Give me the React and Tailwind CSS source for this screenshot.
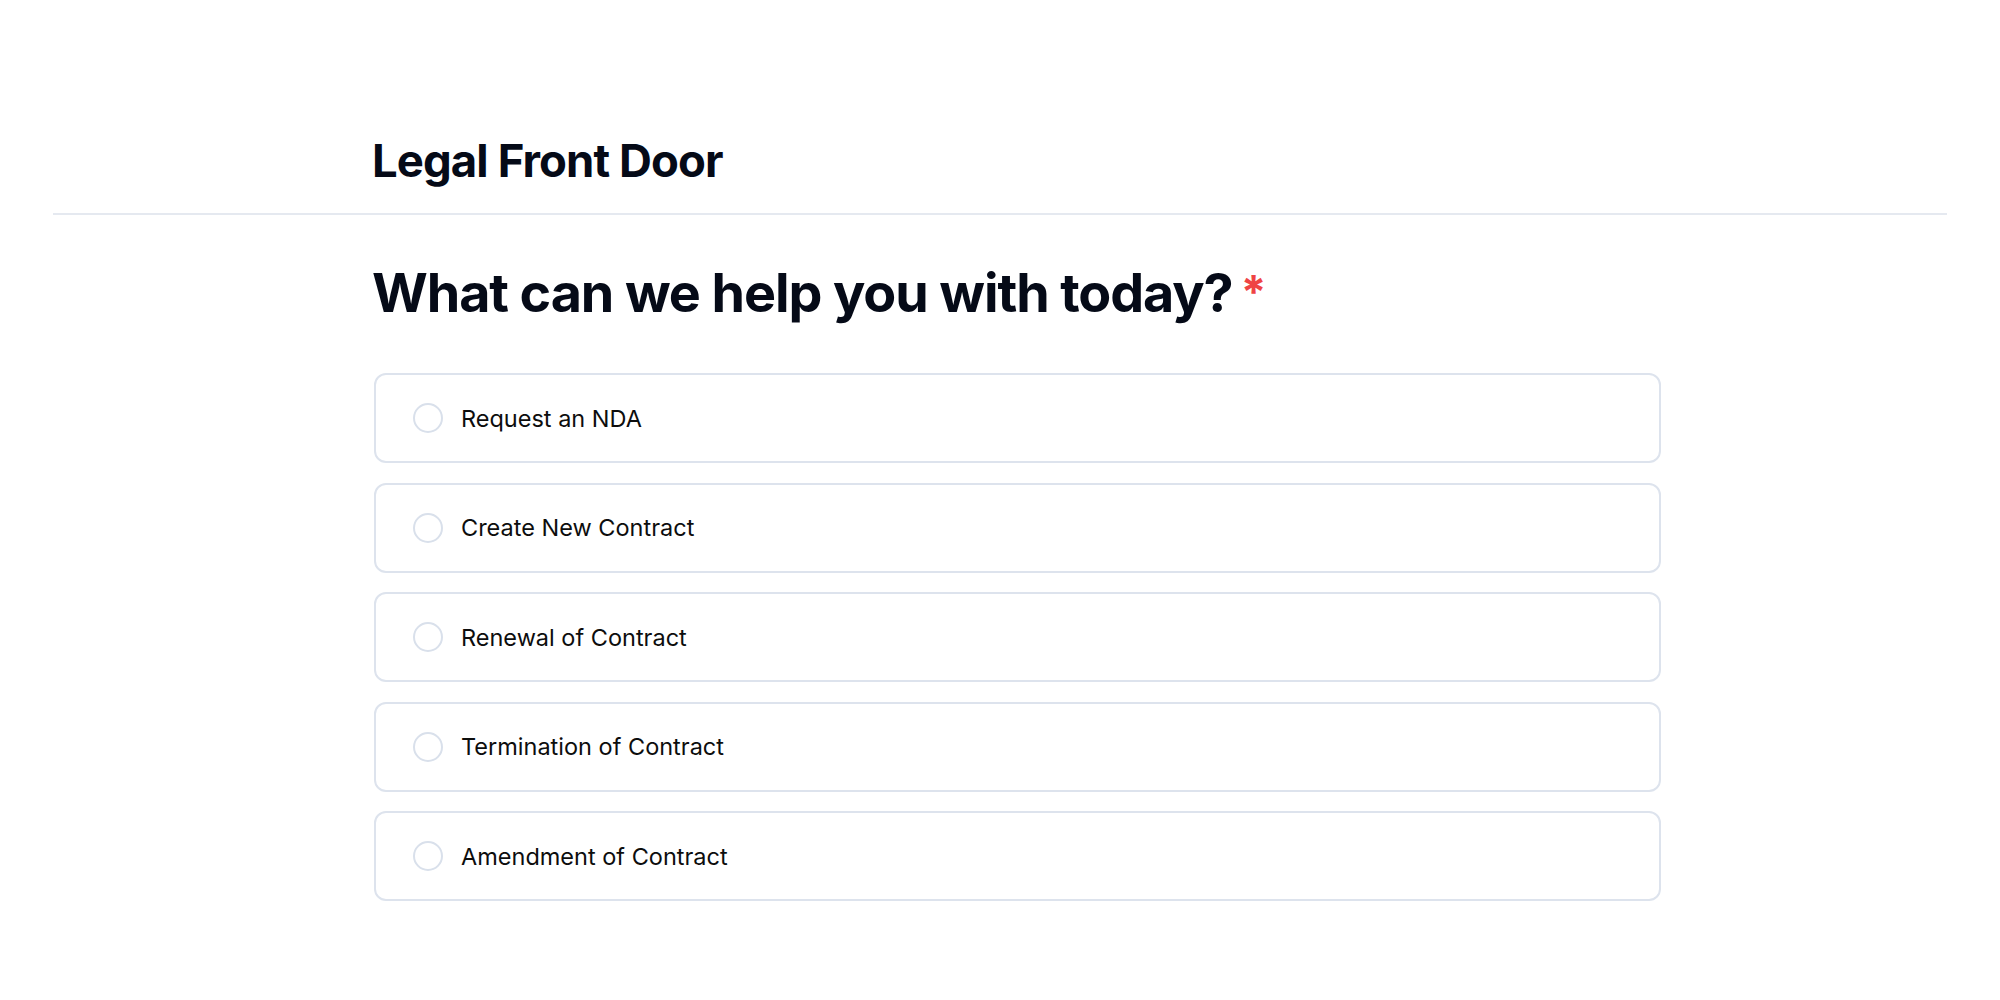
import React from "react";

const options = [
  "Request an NDA",
  "Create New Contract",
  "Renewal of Contract",
  "Termination of Contract",
  "Amendment of Contract",
];

export default function App() {
  return (
    <div className="min-h-screen bg-white" style={{ fontFamily: "Inter, 'Noto Sans', sans-serif" }}>
      <div className="pt-[133px]">
        <div className="mx-[53px] border-b-2 border-[#e5e9f0] pb-[25px] pl-[319px]">
          <h2 className="text-[45.5px] font-bold leading-[55px] tracking-[-0.02em] text-[#050a17]">
            Legal Front Door
          </h2>
        </div>
        <div className="ml-[372px] w-[1289px] pt-[46px]">
          <h1 className="flex items-start text-[53.8px] font-bold leading-[64px] tracking-[-0.02em] text-[#050a17]">
            <span>What can we help you with today?</span>
            <span className="ml-[8px] mt-[8px] text-[46px] leading-[46px] font-bold text-[#ef4444]">*</span>
          </h1>
          <div className="mt-[48px] flex flex-col gap-[19.5px] pl-[2px]">
            {options.map((o) => (
              <label
                key={o}
                className="flex h-[90px] w-[1287px] items-center rounded-xl border-2 border-[#dde3ed] bg-white pl-[37px]"
              >
                <span className="h-[30px] w-[30px] shrink-0 rounded-full border-[2.5px] border-[#d9e0eb]" />
                <span className="ml-[18px] mt-[1px] text-[23.5px] text-[#0d0d0d]">{o}</span>
              </label>
            ))}
          </div>
        </div>
      </div>
    </div>
  );
}
